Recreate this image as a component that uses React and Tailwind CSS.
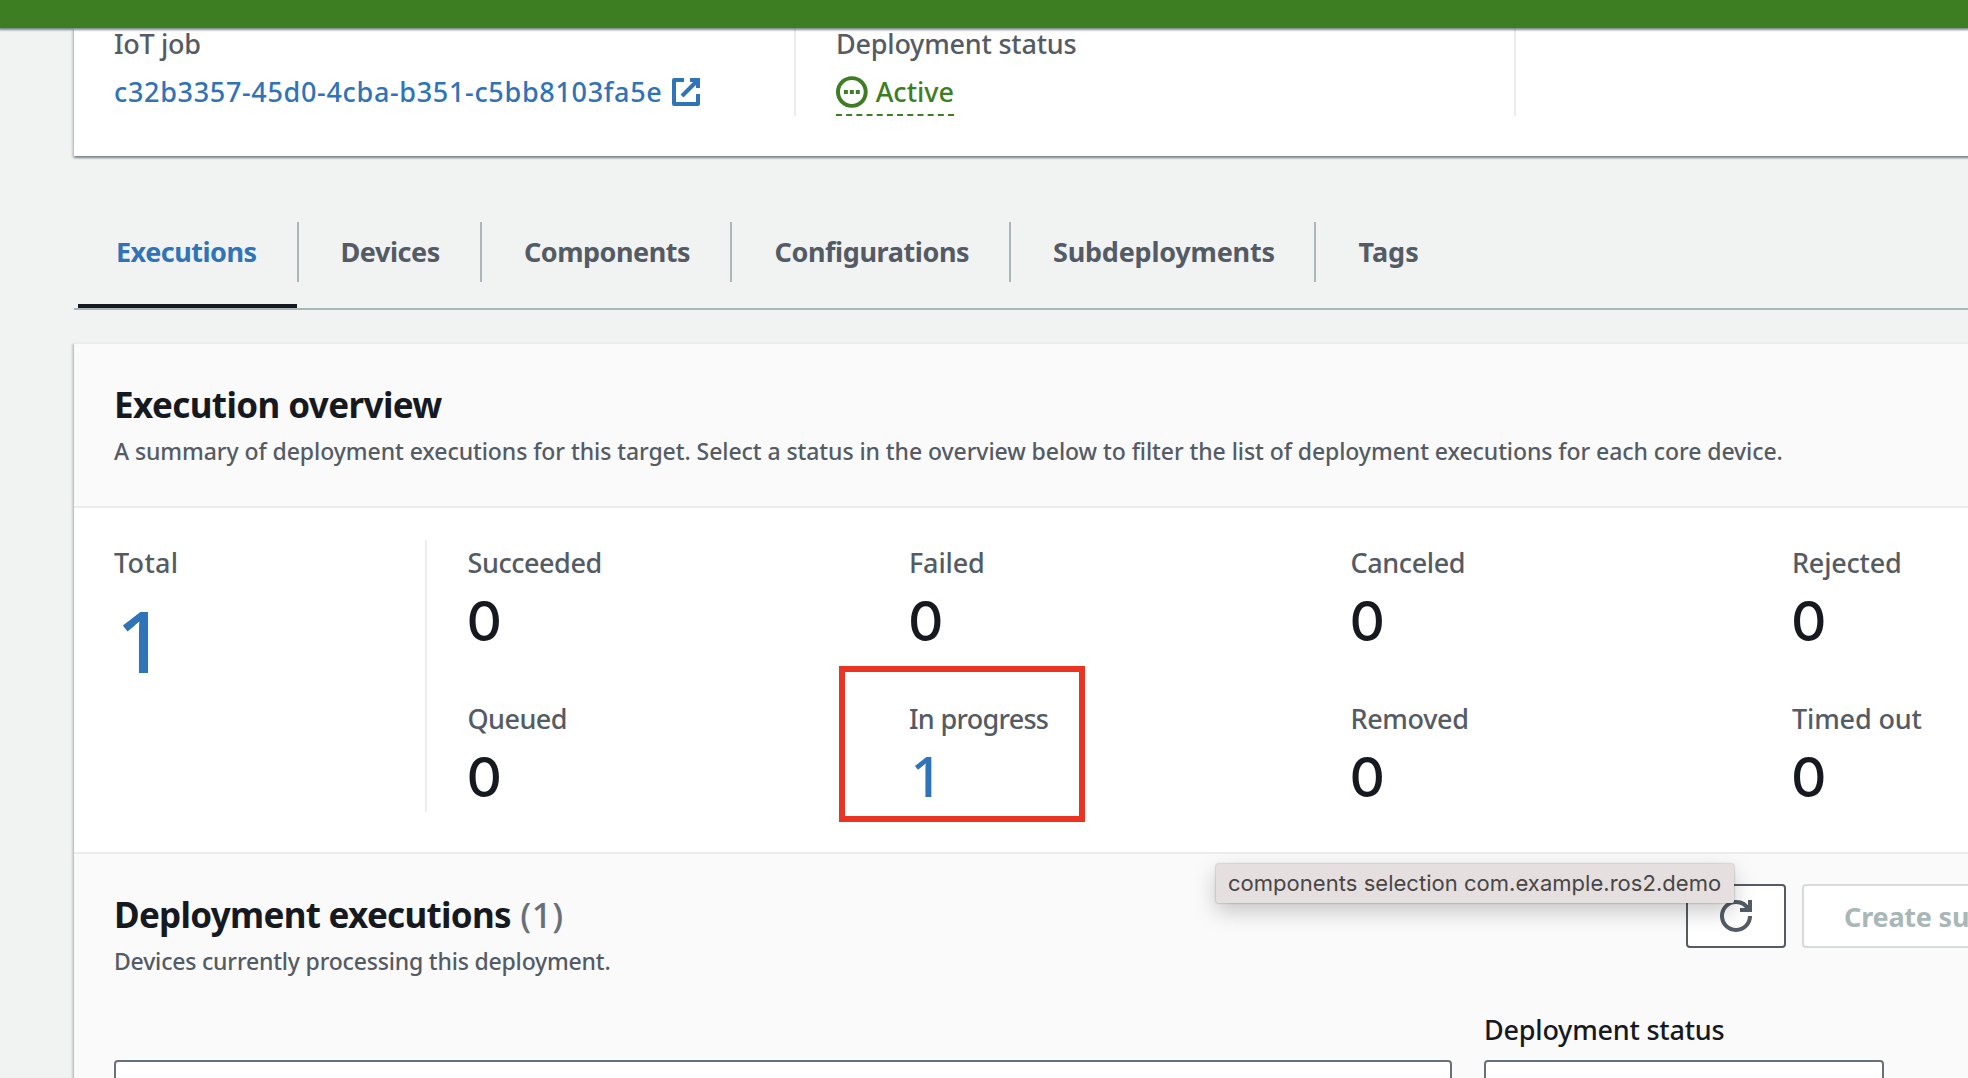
import React from "react";

const tabs = [
  { label: "Executions", cls: "w-[219px] pl-[38px] tracking-[-0.5px] ml-1 text-[#2f73b8] border-b-4 border-[#16191f]" },
  { label: "Devices", cls: "w-[181px] pl-[41.5px] tracking-[-0.45px] text-[#545b64]" },
  { label: "Components", cls: "w-[248px] pl-[42px] tracking-[-0.5px] text-[#545b64]" },
  { label: "Configurations", cls: "w-[277px] pl-[42.5px] tracking-[-0.4px] text-[#545b64]" },
  { label: "Subdeployments", cls: "w-[303px] pl-[42px] tracking-[-0.22px] text-[#545b64]" },
  { label: "Tags", cls: "w-[140px] pl-[42.5px] text-[#545b64]" },
];

const stats = [
  { label: "Succeeded", value: 0, cls: "tracking-[-0.45px]" },
  { label: "Failed", value: 0, cls: "tracking-[-0.15px]" },
  { label: "Canceled", value: 0, cls: "tracking-[-0.4px]" },
  { label: "Rejected", value: 0, cls: "tracking-[-0.2px]" },
  { label: "Queued", value: 0, cls: "tracking-[-0.55px]" },
  { label: "In progress", value: 1, cls: "tracking-[-0.7px]", marked: true },
  { label: "Removed", value: 0, cls: "tracking-[-0.35px]" },
  { label: "Timed out", value: 0, cls: "tracking-[-0.15px]" },
];

const cardShadow =
  "shadow-[0_2px_2px_0_rgba(0,28,36,0.3),2px_2px_2px_0_rgba(0,28,36,0.15),-2px_2px_2px_0_rgba(0,28,36,0.15)]";

function ExternalIcon() {
  return (
    <svg viewBox="0 0 16 16" className="h-8 w-8" fill="none" stroke="currentColor" strokeWidth="2">
      <path d="M10 2h4v4" />
      <path d="M6 10l8-8" />
      <path d="M14 9.05V14H2V2h5" strokeLinejoin="round" />
    </svg>
  );
}

function ProgressIcon() {
  return (
    <svg viewBox="0 0 16 16" className="h-8 w-8" fill="none" stroke="currentColor" strokeWidth="2">
      <circle cx="8" cy="8" r="7" />
      <path d="M4 8h2M7 8h2M10 8h2" />
    </svg>
  );
}

function RefreshIcon() {
  return (
    <svg viewBox="0 0 16 16" className="h-8 w-8" fill="none" stroke="currentColor" strokeWidth="2">
      <path d="M10 5h5V0" />
      <path d="M15 8a6.957 6.957 0 0 1-7 7 6.957 6.957 0 0 1-7-7 6.957 6.957 0 0 1 7-7 6.87 6.87 0 0 1 6.3 4" />
    </svg>
  );
}

function Stat({ stat }) {
  return (
    <div className="relative h-[156px]">
      <div className={`text-[27px] leading-[45px] text-[#545b64] ${stat.cls}`}>{stat.label}</div>
      {stat.value ? (
        <div className="ml-[1.5px] mt-1 text-[56px] leading-[60px] text-[#2f73b8]">{stat.value}</div>
      ) : (
        <div className="-ml-px mt-[6px] font-[Inter] text-[55px] leading-[60px] text-[#16191f]">
          {stat.value}
        </div>
      )}
      {stat.marked && (
        <div className="absolute -left-[70px] -top-[30px] h-[156px] w-[246px] border-[6px] border-[#eb3323]" />
      )}
    </div>
  );
}

export default function App() {
  return (
    <div className="relative h-[1078px] w-[1968px] overflow-hidden bg-[#f1f3f3] font-['Noto_Sans',sans-serif] font-medium">
      <header className="relative z-10 h-7 bg-[#3e7e23] shadow-[0_1px_2px_1px_rgba(0,28,36,0.5)]" />

      <main className="ml-[74px] w-[1940px]">
        <section className={`flex h-[128px] bg-white ${cardShadow}`}>
          <div className="w-[720px] shrink-0 pl-10">
            <div className="pt-px text-[27px] leading-[30px] tracking-[-0.3px] text-[#545b64]">IoT job</div>
            <a className="mt-[11px] flex items-center text-[27px] leading-[44px] tracking-[0.67px] text-[#2f73b8]">
              <span className="w-[548px] whitespace-nowrap">c32b3357-45d0-4cba-b351-c5bb8103fa5e</span>
              <span className="ml-2">
                <ExternalIcon />
              </span>
            </a>
          </div>
          <div className="h-[88px] w-[720px] shrink-0 border-l-2 border-[#eaeded] pl-10">
            <div className="pt-px text-[27px] leading-[30px] tracking-[-0.22px] text-[#545b64]">Deployment status</div>
            <div className="mt-[11px] inline-flex h-[46px] w-[118px] items-center border-b-2 border-dashed border-[#3e7e23] text-[27px] leading-[44px] text-[#3e7e23]">
              <ProgressIcon />
              <span className="ml-2">Active</span>
            </div>
          </div>
          <div className="h-[88px] border-l-2 border-[#eaeded]" />
        </section>

        <nav className="mt-[66px] flex h-[88px] border-b-2 border-[#aab7b8]">
          {tabs.map((tab, i) => (
            <React.Fragment key={tab.label}>
              {i > 0 && <div className="h-[60px] w-[2px] shrink-0 bg-[#aab7b8]" />}
              <div className={`shrink-0 text-[27px] font-bold leading-[60px] ${tab.cls}`}>{tab.label}</div>
            </React.Fragment>
          ))}
        </nav>

        <section className={`mt-8 h-[800px] border-t-2 border-[#eaeded] bg-[#fafafa] ${cardShadow}`}>
          <div className="h-[162px] pl-10 pt-[39px]">
            <h2 className="text-[35px] font-bold leading-[44px] tracking-[-0.6px] text-[#16191f]">Execution overview</h2>
            <p className="mt-[9px] whitespace-nowrap text-[23px] leading-[30px] tracking-[-0.07px] text-[#545b64]">
              A summary of deployment executions for this target. Select a status in the overview below to filter the
              list of deployment executions for each core device.
            </p>
          </div>

          <div className="flex h-[348px] border-y-2 border-[#eaeded] bg-white pl-10 pt-8">
            <div className="w-[311px] shrink-0">
              <div className="text-[27px] leading-[45px] tracking-[0.3px] text-[#545b64]">Total</div>
              <div className="ml-[2px] mt-[10px] text-[86px] leading-[90px] text-[#2f73b8]">1</div>
            </div>
            <div className="grid h-[272px] shrink-0 grid-cols-[repeat(4,441.5px)] border-l-2 border-[#eaeded] pl-[40.5px]">
              {stats.map((stat) => (
                <Stat key={stat.label} stat={stat} />
              ))}
            </div>
          </div>

          <div className="pl-10 pt-[30px]">
            <div className="flex h-[91px]">
              <div className="w-[1572px] shrink-0 pt-[9px]">
                <h2 className="text-[35px] font-bold leading-[44px] tracking-[-0.7px] text-[#16191f]">
                  Deployment executions <span className="ml-px font-medium tracking-[0.5px] text-[#687078]">(1)</span>
                </h2>
                <p className="mt-[9px] text-[23px] leading-[30px] tracking-[-0.19px] text-[#545b64]">
                  Devices currently processing this deployment.
                </p>
              </div>
              <button className="relative flex h-16 w-[100px] shrink-0 items-center justify-center rounded-[4px] border-2 border-[#545b64] bg-white text-[#545b64]">
                <RefreshIcon />
                <div className="absolute -left-[472px] -top-[22px] h-[39px] w-[518px] whitespace-nowrap rounded-[2px] bg-[#e5dfdf] pl-3 text-left font-[Inter] text-[22px] font-normal leading-[38px] tracking-[0.03px] text-[#484646] shadow-[0_0_2px_rgba(0,0,0,0.4),0_8px_22px_rgba(0,0,0,0.22)]">
                  components selection com.example.ros2.demo
                </div>
              </button>
              <button className="ml-4 h-16 w-[340px] shrink-0 whitespace-nowrap rounded-[4px] border-2 border-[#d5dbdb] bg-white pl-10 text-left text-[27px] font-bold leading-[61px] tracking-[-0.2px] text-[#aab7b8]">
                Create su
              </button>
            </div>
            <div className="mt-[33px] flex items-end gap-8">
              <div className="h-[68px] w-[1338px] shrink-0 rounded-[4px] border-2 border-[#687078] bg-white" />
              <div className="w-[400px] shrink-0">
                <div className="text-[27px] leading-[44px] tracking-[-0.22px] text-[#16191f]">Deployment status</div>
                <div className="mt-2 h-[68px] rounded-[4px] border-2 border-[#687078] bg-white" />
              </div>
            </div>
          </div>
        </section>
      </main>
    </div>
  );
}
